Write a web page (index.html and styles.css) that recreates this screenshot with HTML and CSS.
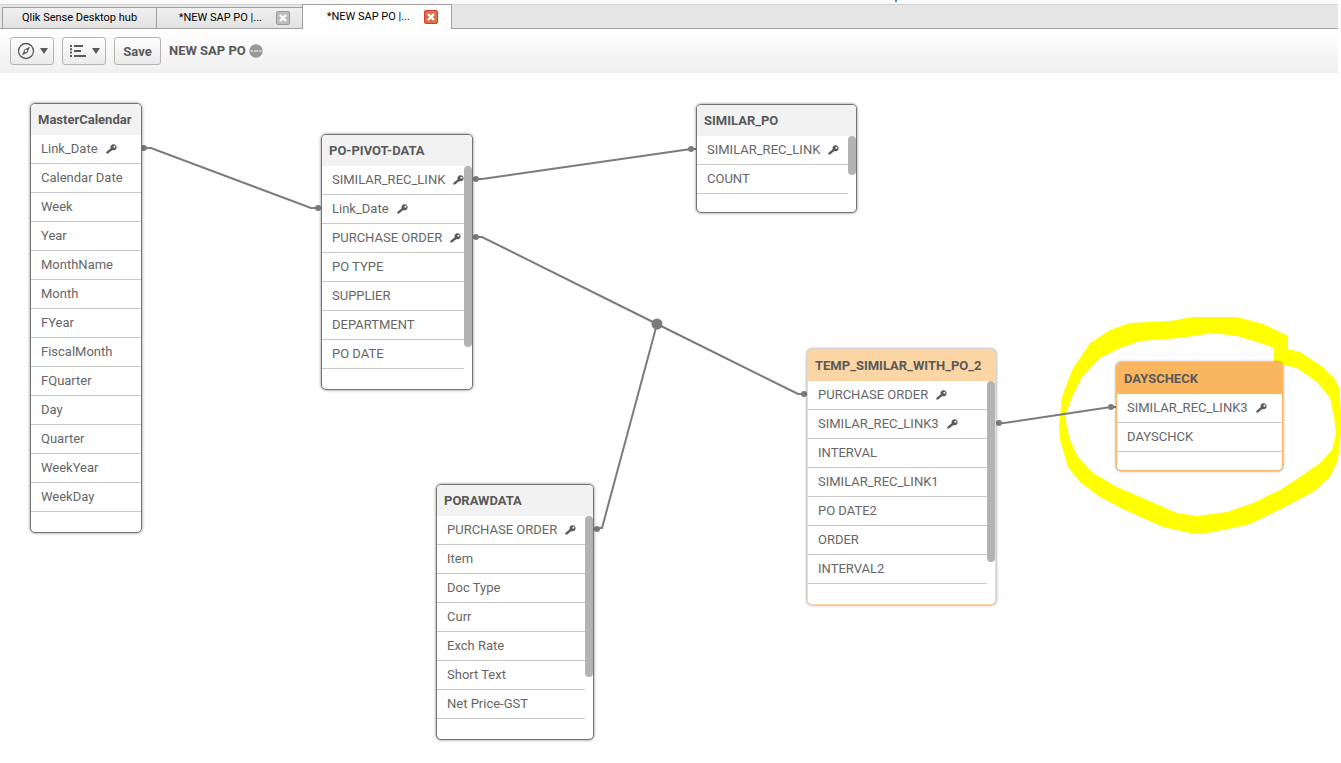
FILE: index.html
```html
<!DOCTYPE html>
<html lang="en">
<head>
<meta charset="utf-8">
<title>NEW SAP PO</title>
<link rel="stylesheet" href="styles.css">
</head>
<body>
<svg class="defs" aria-hidden="true">
  <symbol id="key" viewBox="0 0 11 10"><path d="M7.600.3A3 3 0 0 0 4.700 4.300L.3 8.100V9.500H2.200L3.300 8.300 4.200 8.400 4.300 7.300 5.400 7 6.300 6A3 3 0 1 0 7.600.3ZM8.400 1.800a1 1 0 1 1 0 2 1 1 0 0 1 0-2Z" fill="#595959" fill-rule="evenodd"/></symbol>
  <symbol id="close" viewBox="0 0 8 8"><path d="M1 1L7 7M7 1L1 7" stroke="#fff" stroke-width="2.400"/></symbol>
</svg>
<div class="strip"></div>
<nav class="tabs">
  <button class="tab hub">Qlik Sense Desktop hub</button>
  <div class="tab doc"><button class="label">*NEW SAP PO |...</button><button class="close" aria-label="Close tab"><svg><use href="#close"/></svg></button></div>
  <div class="tab doc active"><button class="label">*NEW SAP PO |...</button><button class="close" aria-label="Close tab"><svg><use href="#close"/></svg></button></div>
</nav>
<header class="toolbar">
  <button class="btn" aria-label="Navigation">
    <svg width="18" height="18" viewBox="0 0 18 18"><circle cx="9" cy="9" r="7.500" fill="none" stroke="#595959" stroke-width="1.300"/><path d="M13 4.500L10.600 10.600 5 13.500 7.400 7.400Z" fill="#595959"/><path d="M9.800 8L8.100 9.800" stroke="#f4f4f4" stroke-width="2"/></svg>
    <svg width="8" height="6" viewBox="0 0 8 6"><path d="M0 0H8L4 6Z" fill="#595959"/></svg>
  </button>
  <button class="btn" aria-label="Menu">
    <svg width="18" height="12" viewBox="0 0 18 12"><path d="M1 1H3M1 4.300H3M1 7.600H3M1 11H3M5 1H14M5 6H12M5 11H17" stroke="#595959" stroke-width="2"/></svg>
    <svg width="8" height="6" viewBox="0 0 8 6"><path d="M0 0H8L4 6Z" fill="#595959"/></svg>
  </button>
  <button class="btn save">Save</button>
  <h1 class="title">NEW SAP PO</h1>
  <svg class="status" width="14" height="14" viewBox="0 0 14 14"><circle cx="7" cy="7" r="6.700" fill="#999"/><path d="M1.500 7H4M5 7H9M10 7H12.500" stroke="#fff"/></svg>
</header>
<main class="canvas">
  <svg class="links" width="1341" height="690" viewBox="0 73 1341 690" aria-hidden="true">
    <path class="marker" fill-rule="evenodd" d="M1059 425L1062 397 1072 370 1090 343 1110 330 1130 323 1170 321 1193 317H1237L1263 324 1288 336V349L1300 352 1323 367 1334 378 1339 388 1341 410V433L1338 460 1330 477 1313 492 1283 508 1250 524 1223 530 1207 533H1190L1163 527 1123 509 1100 497 1080 482 1068 467 1060 440ZM1066 413V423L1070 440 1078 457 1093 473 1117 487 1147 500 1177 513 1197 516 1227 512 1253 503 1280 490 1300 477 1320 463 1332 450 1336 433 1334 417 1330 398 1317 382 1297 368 1274 363V348L1260 343 1237 336 1213 333 1180 338 1140 341 1120 348 1100 358 1082 377 1072 397Z"/>
    <g class="wires"><path d="M144 148H151L311 208H318M476 179H482L691 149H696M476 237H482L657 324L798 394H806M657 324L602 528H597M999 423H1004L1111 407H1116"/></g>
    <g class="ends"><circle cx="144" cy="148" r="3"/><circle cx="318" cy="208" r="3"/><circle cx="476" cy="179" r="3"/><circle cx="691" cy="149" r="3"/><circle cx="476" cy="237" r="3"/><circle cx="657" cy="324" r="5.500"/><circle cx="804" cy="394" r="3"/><circle cx="597" cy="529" r="3"/><circle cx="999" cy="423" r="3"/><circle cx="1111" cy="407" r="3"/></g>
  </svg>
  <section class="node calendar"><h2>MasterCalendar</h2><ul>
    <li>Link_Date<svg><use href="#key"/></svg></li><li>Calendar Date</li><li>Week</li><li>Year</li><li>MonthName</li><li>Month</li><li>FYear</li><li>FiscalMonth</li><li>FQuarter</li><li>Day</li><li>Quarter</li><li>WeekYear</li><li>WeekDay</li></ul></section>
  <section class="node scroll pivot"><h2>PO-PIVOT-DATA</h2><ul>
    <li>SIMILAR_REC_LINK<svg><use href="#key"/></svg></li><li>Link_Date<svg><use href="#key"/></svg></li><li>PURCHASE ORDER<svg><use href="#key"/></svg></li><li>PO TYPE</li><li>SUPPLIER</li><li>DEPARTMENT</li><li>PO DATE</li></ul><span class="thumb"></span></section>
  <section class="node scroll short similar"><h2>SIMILAR_PO</h2><ul>
    <li>SIMILAR_REC_LINK<svg><use href="#key"/></svg></li><li>COUNT</li></ul><span class="thumb"></span></section>
  <section class="node scroll raw"><h2>PORAWDATA</h2><ul>
    <li>PURCHASE ORDER<svg><use href="#key"/></svg></li><li>Item</li><li>Doc Type</li><li>Curr</li><li>Exch Rate</li><li>Short Text</li><li>Net Price-GST</li></ul><span class="thumb"></span></section>
  <section class="node scroll linked temp"><h2>TEMP_SIMILAR_WITH_PO_2</h2><ul>
    <li>PURCHASE ORDER<svg><use href="#key"/></svg></li><li>SIMILAR_REC_LINK3<svg><use href="#key"/></svg></li><li>INTERVAL</li><li>SIMILAR_REC_LINK1</li><li>PO DATE2</li><li>ORDER</li><li>INTERVAL2</li></ul><span class="thumb"></span></section>
  <section class="node short selected days"><h2>DAYSCHECK</h2><ul>
    <li>SIMILAR_REC_LINK3<svg><use href="#key"/></svg></li><li>DAYSCHCK</li></ul></section>
</main>
</body>
</html>
```
FILE: styles.css
```css
* { box-sizing: border-box; }
body { margin: 0; background: #fff; color: #595959; font-family: Roboto, "Noto Sans", sans-serif; overflow-x: hidden; }
button { font: inherit; color: inherit; padding: 0; border: 0; background: none; }
.defs { position: absolute; width: 0; height: 0; }
.strip { height: 4px; margin-right: 3px; background: linear-gradient(#4a90c8, #4a90c8) 895px 0 / 2px 2px no-repeat #fafafa; }
.tabs { display: flex; align-items: flex-end; height: 25px; margin-right: 3px; padding-left: 2px; border-top: 1px solid #d2d2d2; background: #e6e6e6; box-shadow: inset 0 -1px #a0a0a0; color: #000; font-size: 11px; line-height: 16px; }
.tab { display: flex; align-items: center; justify-content: center; height: 22px; border: 1px solid #a0a0a0; border-right: 0; background: linear-gradient(#f0f0f0, #e2e2e2); }
.hub { width: 154px; }
.doc { width: 146px; justify-content: flex-end; padding-right: 12px; gap: 14px; }
.active { width: 150px; height: 25px; margin-top: -1px; padding-right: 13px; border-right: 1px solid #a0a0a0; border-bottom: 0; background: #fff; }
.close { display: grid; place-items: center; width: 14px; height: 14px; border: 1px solid #999; border-radius: 2px; background: #bcbcbc; }
.close svg { width: 8px; height: 8px; }
.active .close { border-color: #d43a24; background: #dc704c; }
.toolbar { display: flex; align-items: center; height: 44px; margin-right: 3px; padding: 0 10px; background: linear-gradient(#fff, #f0f0f0); }
.btn { display: flex; align-items: center; justify-content: center; gap: 5px; width: 44px; height: 28px; margin-right: 8px; border: 1px solid #b3b3b3; border-radius: 3px; background: linear-gradient(#fff, #eaeaea); }
.save { width: 47px; font-size: 13px; font-weight: 700; }
.title { margin: 0; font-size: 13px; line-height: 18px; font-weight: 700; }
.status { margin-left: 3px; }
.canvas { position: relative; min-height: 690px; }
.links { position: absolute; left: 0; top: 0; pointer-events: none; }
.marker { fill: #ff0; }
.wires { fill: none; stroke: #7b7b7b; stroke-width: 2; }
.ends { fill: #7b7b7b; }
.node { position: absolute; padding-bottom: 20px; border: 1px solid #737373; border-radius: 5px; background: #fff; box-shadow: 0 0 3px rgba(0,0,0,.5); }
.short { padding-bottom: 18px; }
.node h2 { height: 31px; margin: 0; padding: 0 7px; border-radius: 4px 4px 0 0; background: #f2f2f2; font-size: 13px; line-height: 31px; font-weight: 700; white-space: nowrap; }
.node ul { margin: 0; padding: 0; list-style: none; }
.scroll ul { margin-right: 8px; }
.node li { display: flex; align-items: center; gap: 8px; height: 29px; padding-left: 10px; border-bottom: 1px solid #c8c8c8; color: #666; font-size: 13px; line-height: 28px; white-space: nowrap; }
.node li svg { flex: none; width: 11px; height: 10px; }
.thumb { position: absolute; top: 31px; right: 0; width: 8px; height: 181px; border-radius: 4px; background: #b3b3b3; }
.linked { border-color: #fcd5a4; }
.linked h2 { background: #fcd5a4; }
.selected { border-color: #fab65f; }
.selected h2 { background: #fab65f; }
.calendar { left: 30px; top: 30px; width: 112px; }
.pivot { left: 321px; top: 61px; width: 152px; }
.similar { left: 696px; top: 31px; width: 161px; }
.similar .thumb { height: 39px; }
.raw { left: 436px; top: 411px; width: 158px; }
.raw .thumb { height: 161px; }
.temp { left: 807px; top: 276px; width: 189px; }
.days { left: 1116px; top: 289px; width: 167px; }
```
